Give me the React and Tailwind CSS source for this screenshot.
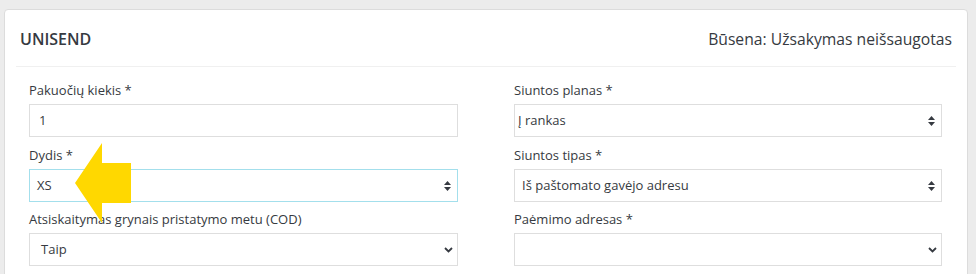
import React from "react";

const SortIcon = () => (
  <svg width="7" height="10" viewBox="0 0 7 10" className="block">
    <polygon points="3.5,0 7,4 0,4" fill="#363a41" />
    <polygon points="0,6 7,6 3.5,10" fill="#363a41" />
  </svg>
);

const ChevronIcon = () => (
  <svg width="9" height="6" viewBox="0 0 9 6" className="block">
    <polyline points="1,1 4.5,4.5 8,1" fill="none" stroke="#363a41" strokeWidth="1.8" />
  </svg>
);

function Field({ label, children, tight }) {
  return (
    <div className={tight ? "mb-[7px]" : "mb-[8px]"}>
      <div className="h-[20px] leading-[20px] mb-[4px] text-[13px] text-[#363a41]">{label}</div>
      {children}
    </div>
  );
}

function Box({ value, pl, icon, focus }) {
  return (
    <div
      className={
        "h-[33px] flex items-center bg-white text-[13px] text-[#363a41] border " +
        (focus ? "border-[#a3dfec]" : "border-[#dedede]")
      }
      style={{ paddingLeft: pl }}
    >
      <span className="flex-1">{value}</span>
      {icon === "sort" && (
        <span className="mr-[6px]">
          <SortIcon />
        </span>
      )}
      {icon === "chev" && (
        <span className="mr-[4px]">
          <ChevronIcon />
        </span>
      )}
    </div>
  );
}

export default function App() {
  return (
    <div
      className="relative w-[976px] h-[274px] overflow-hidden bg-[#ececec] pt-[9px] pl-[4px]"
      style={{ fontFamily: '"Open Sans", "Noto Sans", sans-serif' }}
    >
      <div className="w-[964px] h-[300px] bg-white border border-[#dcdcdc] rounded-[4px]">
        <div className="mx-[11px] px-[4px] pt-[18px] pb-[16px] border-b border-[#f0f0f0] flex justify-between items-center h-[57px]">
          <div className="text-[16px] leading-[22px] font-semibold text-[#363a41]">UNISEND</div>
          <div className="text-[15.7px] leading-[22px] text-[#363a41]">Būsena: Užsakymas neišsaugotas</div>
        </div>
        <div className="pl-[24px] pt-[13px] grid grid-cols-[429px_428px] gap-x-[56px]">
          <div>
            <Field label="Pakuočių kiekis *">
              <Box value="1" pl={9} />
            </Field>
            <Field label="Dydis *" tight>
              <Box value="XS" pl={7} icon="sort" focus />
            </Field>
            <Field label="Atsiskaitymas grynais pristatymo metu (COD)">
              <Box value="Taip" pl={11} icon="chev" />
            </Field>
          </div>
          <div>
            <Field label="Siuntos planas *">
              <Box value="Į rankas" pl={3} icon="sort" />
            </Field>
            <Field label="Siuntos tipas *" tight>
              <Box value="Iš paštomato gavėjo adresu" pl={7} icon="sort" />
            </Field>
            <Field label="Paėmimo adresas *">
              <Box value="" pl={7} icon="chev" />
            </Field>
          </div>
        </div>
      </div>
      <svg
        width="56"
        height="80"
        viewBox="0 0 56 80"
        className="absolute left-[75px] top-[143px]"
      >
        <polygon points="0,40 27,0 27,20 56,20 56,60 27,60 27,80" fill="#ffd800" />
      </svg>
    </div>
  );
}
